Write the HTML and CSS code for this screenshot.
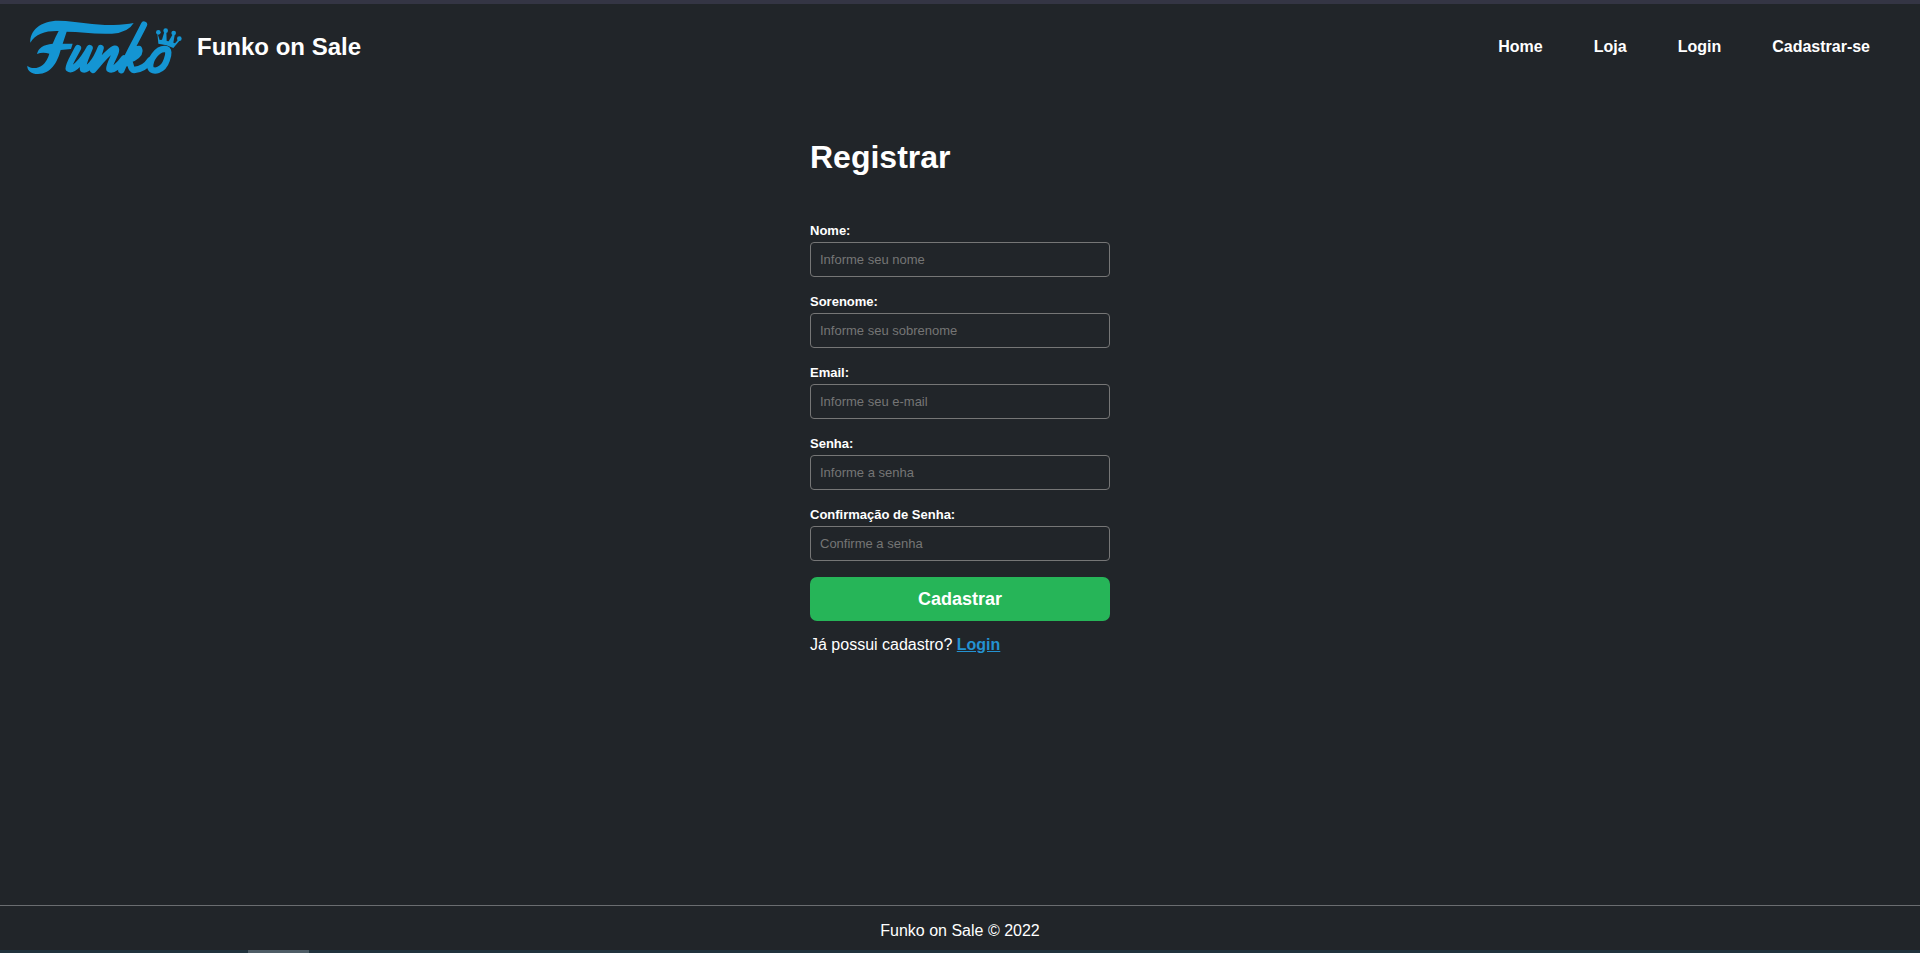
FILE: index.html
```html
<!DOCTYPE html>
<html lang="pt-BR">
<head>
<meta charset="utf-8">
<meta name="viewport" content="width=device-width, initial-scale=1">
<title>Funko on Sale</title>
<link rel="stylesheet" href="styles.css">
</head>
<body>
<header class="header">
  <div class="brand">
    <svg class="brand-logo" viewBox="80 60 465 165" role="img" aria-label="Funko">
      <path class="logo-fill" d="M90 128C88 92 120 62 175 62C235 64 285 76 340 75Q375 74 400 69Q384 98 335 101C285 104 240 95 199 95L187 131H217L212 147L181 150C171 188 151 222 113 222C93 222 80 212 81 197C91 207 113 207 128 194Q141 182 147 161Q127 155 110 162Q115 135 157 131Q164 113 175 93C135 92 106 101 90 128Z"/>
      <path class="logo-line" d="M233 144C220 170 204 193 205 206C217 216 246 184 268 144C256 174 246 192 248 208C261 213 286 184 301 144C294 170 285 190 278 210C298 188 325 151 344 146C357 147 325 192 327 207C338 213 356 196 371 175M431 74C414 110 382 163 363 211M377 190C387 167 404 146 416 147C422 161 403 176 384 180C393 190 389 210 401 210C420 209 437 200 450 180"/>
      <path class="logo-line" d="M494 147C471 145 447 180 450 202C456 221 489 212 499 181C506 163 507 148 494 147Z"/>
      <path class="logo-fill" d="M471 99L478 120L485 119L493 92H498L499 123L505 124L519 100H524L519 128L524 130L536 116L540 119L519 144Q500 134 474 131Z"/>
      <circle class="logo-fill" cx="474" cy="97" r="7"/><circle class="logo-fill" cx="496" cy="92" r="7"/><circle class="logo-fill" cx="520" cy="99" r="7"/><circle class="logo-fill" cx="537" cy="116" r="7"/>
    </svg>
    <h2 class="brand-name">Funko on Sale</h2>
  </div>
  <nav class="nav">
    <a href="#">Home</a>
    <a href="#">Loja</a>
    <a href="#">Login</a>
    <a href="#">Cadastrar-se</a>
  </nav>
</header>
<main class="main">
  <h1 class="title">Registrar</h1>
  <form class="form">
    <div class="field"><label for="nome">Nome:</label><input id="nome" type="text" placeholder="Informe seu nome"></div>
    <div class="field"><label for="sobrenome">Sorenome:</label><input id="sobrenome" type="text" placeholder="Informe seu sobrenome"></div>
    <div class="field"><label for="email">Email:</label><input id="email" type="email" placeholder="Informe seu e-mail"></div>
    <div class="field"><label for="senha">Senha:</label><input id="senha" type="password" placeholder="Informe a senha"></div>
    <div class="field"><label for="confirma">Confirmação de Senha:</label><input id="confirma" type="password" placeholder="Confirme a senha"></div>
    <button class="submit" type="submit">Cadastrar</button>
  </form>
  <p class="signin">Já possui cadastro? <a href="#">Login</a></p>
</main>
<footer class="footer">Funko on Sale © 2022</footer>
<div class="bottom-bar"><div class="bottom-thumb"></div></div>
</body>
</html>
```
FILE: styles.css
```css
* {
  box-sizing: border-box;
  margin: 0;
}

body {
  min-height: 100vh;
  display: flex;
  flex-direction: column;
  border-top: 4px solid #343544;
  background: #212529;
  color: #fff;
  font: 16px/20px "Liberation Sans", Arial, sans-serif;
}

.header {
  display: flex;
  align-items: center;
  justify-content: space-between;
  padding: 16px 50px 15px 27px;
}

.brand {
  display: flex;
  align-items: center;
  gap: 15px;
}

.brand-logo {
  width: 155px;
  height: 55px;
}

.logo-fill {
  fill: #1495d3;
}

.logo-line {
  fill: none;
  stroke: #1495d3;
  stroke-width: 19px;
  stroke-linecap: round;
  stroke-linejoin: round;
}

.brand-name {
  padding-bottom: 2px;
  font-size: 24px;
  line-height: 28px;
}

.nav {
  display: flex;
  gap: 51px;
  padding-bottom: 2px;
}

.nav a {
  color: #fff;
  font-weight: bold;
  text-decoration: none;
}

.main {
  flex: 1;
  width: 300px;
  margin: 0 auto;
  padding-top: 49px;
}

.title {
  margin-bottom: 47px;
  font-size: 32px;
  line-height: 36px;
}

.form {
  display: flex;
  flex-direction: column;
  gap: 16px;
}

.field {
  display: flex;
  flex-direction: column;
  gap: 3px;
}

.field label {
  font-size: 13px;
  font-weight: bold;
  line-height: 17px;
}

.field input {
  width: 100%;
  padding: 9px;
  border: 1px solid #767676;
  border-radius: 4px;
  background: transparent;
  color: #fff;
  font: 13px/15px "Liberation Sans", Arial, sans-serif;
}

.field input::placeholder {
  color: #757575;
}

.submit {
  padding: 12px;
  border: 0;
  border-radius: 7px;
  background: #26b558;
  color: #fff;
  font: bold 18px/20px "Liberation Sans", Arial, sans-serif;
}

.signin {
  margin-top: 14px;
}

.signin a {
  color: #2492d1;
  font-weight: bold;
}

.footer {
  padding: 15px 0 9px;
  border-top: 1px solid #6a6d70;
  text-align: center;
}

.bottom-bar {
  height: 3px;
  padding-left: 248px;
  background: #20333d;
}

.bottom-thumb {
  width: 61px;
  height: 100%;
  background: #4e5d66;
}
```
